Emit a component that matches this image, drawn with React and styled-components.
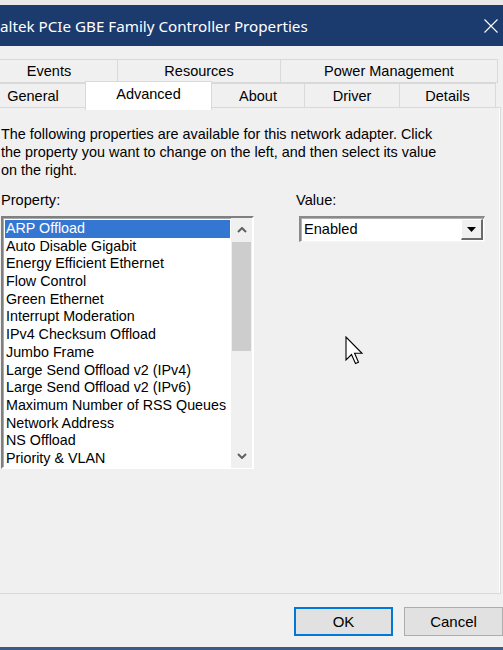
import React from "react";
import styled, { createGlobalStyle } from "styled-components";

const GlobalStyle = createGlobalStyle`
  html, body {
    margin: 0;
    padding: 0;
    background: #f0f0f0;
    overflow: hidden;
  }
  body {
    font-family: "Liberation Sans", Arial, sans-serif;
    color: #000;
  }
`;

const properties = [
  "ARP Offload",
  "Auto Disable Gigabit",
  "Energy Efficient Ethernet",
  "Flow Control",
  "Green Ethernet",
  "Interrupt Moderation",
  "IPv4 Checksum Offload",
  "Jumbo Frame",
  "Large Send Offload v2 (IPv4)",
  "Large Send Offload v2 (IPv6)",
  "Maximum Number of RSS Queues",
  "Network Address",
  "NS Offload",
  "Priority & VLAN",
];

const topTabs = [
  { label: "Events", w: 138 },
  { label: "Resources", w: 164 },
  { label: "Power Management", w: 218 },
];

const bottomTabs = [
  { label: "General", w: 106 },
  { label: "Advanced", w: 127, active: true },
  { label: "About", w: 94 },
  { label: "Driver", w: 96 },
  { label: "Details", w: 97 },
];

export default function App() {
  return (
    <Screen>
      <GlobalStyle />
      <TopStrip />
      <TitleBar>
        <Title>altek PCIe GBE Family Controller Properties</Title>
        <CloseIcon viewBox="0 0 14 14">
          <path d="M0.5 0.5 L13.5 13.5 M13.5 0.5 L0.5 13.5" />
        </CloseIcon>
      </TitleBar>

      <Dialog>
        <TabRow>
          {topTabs.map((t) => (
            <Tab key={t.label} $w={t.w}>
              {t.label}
            </Tab>
          ))}
        </TabRow>
        <TabRow>
          {bottomTabs.map((t) => (
            <Tab key={t.label} $w={t.w} $active={t.active}>
              {t.label}
            </Tab>
          ))}
        </TabRow>

        <Panel>
          <Description>
            The following properties are available for this network adapter. Click
            <br />
            the property you want to change on the left, and then select its value
            <br />
            on the right.
          </Description>

          <Columns>
            <div>
              <FieldLabel>Property:</FieldLabel>
              <ListBox>
                <Items>
                  {properties.map((p, i) => (
                    <Item key={p} $selected={i === 0}>
                      {p}
                    </Item>
                  ))}
                </Items>
                <ScrollBar>
                  <ScrollArrow>
                    <svg width="10" height="6" viewBox="0 0 10 6">
                      <path d="M1 5 L5 1 L9 5" />
                    </svg>
                  </ScrollArrow>
                  <Track>
                    <Thumb />
                  </Track>
                  <ScrollArrow>
                    <svg width="10" height="6" viewBox="0 0 10 6">
                      <path d="M1 1 L5 5 L9 1" />
                    </svg>
                  </ScrollArrow>
                </ScrollBar>
              </ListBox>
            </div>

            <div>
              <FieldLabel>Value:</FieldLabel>
              <Combo>
                <ComboText>Enabled</ComboText>
                <ComboButton>
                  <svg width="9" height="5" viewBox="0 0 9 5">
                    <path d="M0 0 H9 L4.5 5 Z" fill="#000" />
                  </svg>
                </ComboButton>
              </Combo>
            </div>
          </Columns>

          <Cursor viewBox="0 0 19 29" width="19" height="29">
            <path
              d="M1 1 L1 24 L6.5 18.5 L10.5 27.5 L13.5 26.2 L9.6 17.3 L17 17.3 Z"
              fill="#fff"
              stroke="#000"
              strokeWidth="1.1"
              strokeLinejoin="miter"
            />
          </Cursor>
        </Panel>

        <ButtonRow>
          <Button $default>OK</Button>
          <Button>Cancel</Button>
        </ButtonRow>
      </Dialog>
      <BottomEdge />
    </Screen>
  );
}

const Screen = styled.div`
  width: 503px;
  height: 650px;
  display: flex;
  flex-direction: column;
  background: #f0f0f0;
  overflow: hidden;
`;

const TopStrip = styled.div`
  height: 5px;
  background: #e8e8e8;
`;

const TitleBar = styled.div`
  height: 41px;
  background: #1b3a6e;
  display: flex;
  align-items: center;
  justify-content: space-between;
  padding-right: 5px;
`;

const Title = styled.span`
  color: #fff;
  font-family: "Noto Sans", "Open Sans", sans-serif;
  font-size: 15.2px;
  margin-top: 1px;
  white-space: nowrap;
`;

const CloseIcon = styled.svg`
  width: 14px;
  height: 14px;
  stroke: #fff;
  stroke-width: 1.1;
  fill: none;
`;

const Dialog = styled.div`
  flex: 1;
  display: flex;
  flex-direction: column;
  margin-left: -20px;
  width: 525px;
  padding-top: 13px;
`;

const TabRow = styled.div`
  display: flex;
  width: 520px;
  height: 24px;
  & + & {
    height: 25px;
  }
`;

const Tab = styled.div`
  box-sizing: border-box;
  width: ${(p) => p.$w}px;
  height: ${(p) => (p.$active ? "29px" : "100%")};
  margin-top: ${(p) => (p.$active ? "-2px" : "0")};
  margin-left: -1px;
  border: 1px solid #d9d9d9;
  border-bottom: ${(p) => (p.$active ? "none" : "1px solid #d9d9d9")};
  background: ${(p) => (p.$active ? "#fff" : "#f0f0f0")};
  position: relative;
  z-index: ${(p) => (p.$active ? 2 : 1)};
  display: flex;
  align-items: center;
  justify-content: center;
  font-size: 14.5px;
  padding-bottom: ${(p) => (p.$active ? "5px" : "0")};
  &:first-child {
    margin-left: 0;
  }
`;

const Panel = styled.div`
  box-sizing: border-box;
  position: relative;
  width: 521px;
  height: 487px;
  margin-top: -1px;
  border: 1px solid #d9d9d9;
  box-shadow: inset -1px 0 0 #fff;
  padding: 17px 0 0 20px;
`;

const Description = styled.p`
  margin: 0;
  white-space: nowrap;
  font-size: 14.4px;
  line-height: 18px;
`;

const Columns = styled.div`
  display: grid;
  grid-template-columns: 253px 186px;
  column-gap: 42px;
  margin-top: 12px;
`;

const FieldLabel = styled.div`
  font-size: 14.6px;
  line-height: 18px;
  height: 25px;
`;

const ListBox = styled.div`
  box-sizing: border-box;
  width: 253px;
  height: 253px;
  display: grid;
  grid-template-columns: 1fr 21px;
  background: #fff;
  border-style: solid;
  border-width: 2px 2px 2px 2px;
  border-color: #7f7f7f #fff #fff #7f7f7f;
  box-shadow: inset 1px 1px 0 #a9a9a9;
`;

const Items = styled.div`
  padding: 2px 1px 0 2px;
`;

const Item = styled.div`
  height: 17.7px;
  line-height: 17.7px;
  font-size: 14.3px;
  padding-left: 1px;
  white-space: nowrap;
  background: ${(p) => (p.$selected ? "#3377d3" : "transparent")};
  color: ${(p) => (p.$selected ? "#fff" : "#000")};
`;

const ScrollBar = styled.div`
  display: flex;
  flex-direction: column;
  background: #f0f0f0;
`;

const ScrollArrow = styled.div`
  height: 23px;
  display: flex;
  align-items: center;
  justify-content: center;
  svg {
    fill: none;
    stroke: #606060;
    stroke-width: 2;
  }
`;

const Track = styled.div`
  flex: 1;
  padding: 1px 1px 0 1px;
`;

const Thumb = styled.div`
  height: 109px;
  background: #cdcdcd;
`;

const Combo = styled.div`
  box-sizing: border-box;
  width: 186px;
  height: 26px;
  margin-left: 3px;
  display: flex;
  align-items: stretch;
  background: #fff;
  border-style: solid;
  border-width: 2px 1px 1px 2px;
  border-color: #8a8a8a #f5f5f5 #f5f5f5 #8a8a8a;
  box-shadow: inset 1px 1px 0 #b0b0b0;
`;

const ComboText = styled.div`
  flex: 1;
  font-size: 14.6px;
  line-height: 22px;
  padding-left: 3px;
`;

const ComboButton = styled.div`
  box-sizing: border-box;
  width: 22px;
  margin: 1px 1px 1px 0;
  background: #f0f0f0;
  border-style: solid;
  border-width: 1px 2px 2px 1px;
  border-color: #fff #6b6b6b #6b6b6b #fff;
  display: flex;
  align-items: center;
  justify-content: center;
`;

const Cursor = styled.svg`
  position: absolute;
  left: 364px;
  top: 228px;
`;

const ButtonRow = styled.div`
  display: flex;
  justify-content: flex-end;
  gap: 11px;
  margin-top: 13px;
  width: 523px;
`;

const Button = styled.button`
  box-sizing: border-box;
  width: 99px;
  height: 29px;
  padding: 0;
  background: #e1e1e1;
  border: ${(p) => (p.$default ? "2px solid #0078d7" : "1px solid #adadad")};
  font-family: "Liberation Sans", Arial, sans-serif;
  font-size: 15px;
  color: #000;
`;

const BottomEdge = styled.div`
  height: 3px;
  background: #3b5b82;
`;
